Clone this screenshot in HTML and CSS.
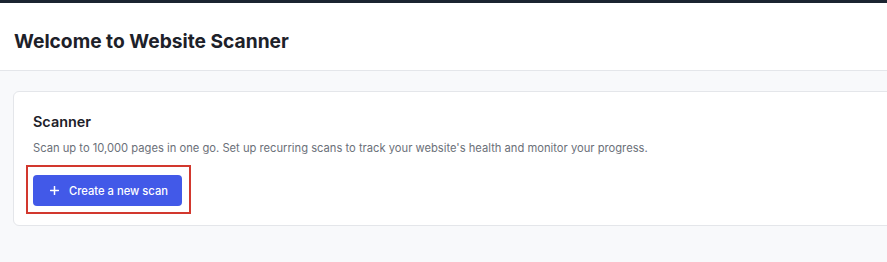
FILE: index.html
```html
<!DOCTYPE html>
<html lang="en">
<head>
<meta charset="utf-8">
<title>Website Scanner</title>
<link rel="stylesheet" href="styles.css">
</head>
<body>
<div class="topbar"></div>
<header class="page-header">
  <h1 class="page-title">Welcome to Website Scanner</h1>
</header>
<main class="content">
  <section class="card">
    <h2 class="card-title">Scanner</h2>
    <p class="card-text">Scan up to 10,000 pages in one go. Set up recurring scans to track your website's health and monitor your progress.</p>
    <div class="highlight">
      <button class="btn-primary" type="button">
        <svg class="btn-icon" width="9" height="9" viewBox="0 0 9 9" aria-hidden="true"><path d="M4.5 0.5v8M0.5 4.5h8" stroke="currentColor" stroke-width="1.5" stroke-linecap="round" fill="none"/></svg>
        <span>Create a new scan</span>
      </button>
    </div>
  </section>
</main>
</body>
</html>
```
FILE: styles.css
```css
* { box-sizing: border-box; }
html, body { margin: 0; padding: 0; }
body {
  font-family: Inter, "Noto Sans", sans-serif;
  background: #f8f9fb;
  color: #1d2129;
  width: 887px;
  height: 262px;
  overflow: hidden;
}
.topbar {
  height: 3px;
  background: #1b2431;
}
.page-header {
  height: 68px;
  background: #ffffff;
  border-bottom: 1px solid #e4e6ea;
  padding: 26px 14px 0;
}
.page-title {
  margin: 0;
  font-size: 19.2px;
  line-height: 24px;
  font-weight: 700;
  color: #1d2129;
}
.content {
  padding: 20px 0 0 13px;
}
.card {
  width: 900px;
  height: 135px;
  background: #fff;
  border: 1px solid #e4e6ea;
  border-radius: 6px;
  padding: 21px 19px 0;
}
.card-title {
  margin: 0;
  font-size: 14.4px;
  font-weight: 600;
  line-height: 18px;
  color: #1d2129;
}
.card-text {
  margin: 9px 0 0;
  font-size: 11.2px;
  line-height: 16px;
  color: #6b7079;
}
.highlight {
  display: inline-flex;
  margin: 9px 0 0 -7px;
  padding: 8px 7px 6px 5px;
  border: 2px solid #d2382e;
}
.btn-primary {
  display: inline-flex;
  align-items: center;
  gap: 10px;
  height: 31px;
  padding: 0 14px 0 17px;
  border: 0;
  border-radius: 4px;
  background: #4259e8;
  color: #fff;
  font-family: Inter, "Noto Sans", sans-serif;
  font-size: 11.2px;
  font-weight: 500;
}
.btn-icon { display: block; }
```
